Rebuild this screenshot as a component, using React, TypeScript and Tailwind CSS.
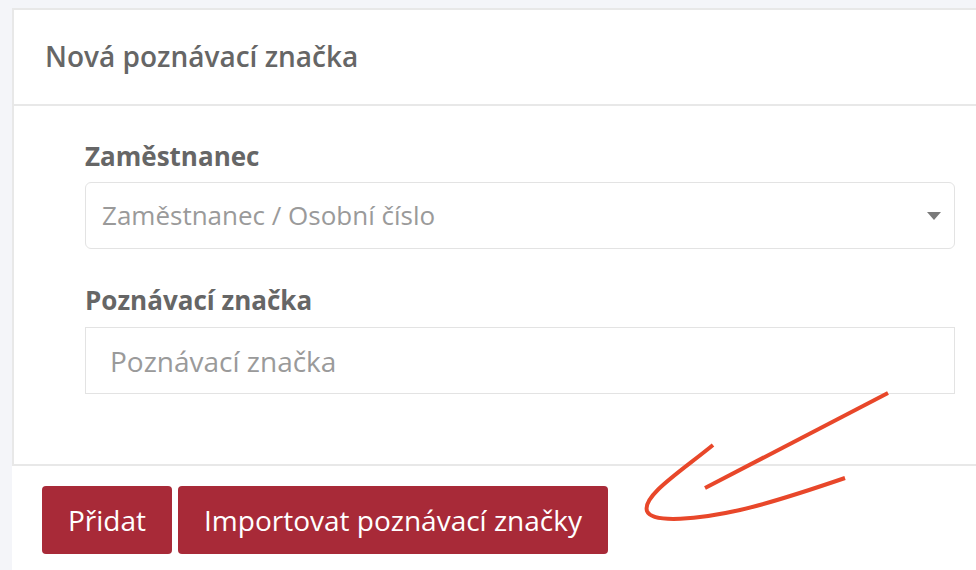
import React from "react";

export default function App() {
  return (
    <div
      className="relative w-[976px] h-[570px] overflow-hidden bg-[#f4f5f9] pt-2 pl-3"
      style={{ fontFamily: '"Open Sans", "Noto Sans", sans-serif' }}
    >
      <div className="w-[1040px] h-full bg-white">
        <div className="border-l-2 border-t-2 border-b-2 border-[#e8e8e8]">
          {/* header */}
          <div className="h-[96px] flex items-center pl-[31px] pb-[2px] border-b-2 border-[#e8e8e8]">
            <h2 className="text-[28px] font-semibold text-[#666666]">Nová poznávací značka</h2>
          </div>

          {/* body */}
          <div className="h-[358px] pl-[71px] pt-[32px]">
            <div className="w-[870px]">
              <label className="block text-[26px] leading-[36px] font-bold text-[#666666] mb-[8px]">
                Zaměstnanec
              </label>
              <div className="h-[67px] rounded-md border border-[#e3e3e3] flex items-center justify-between pl-4 pr-[13px]">
                <span className="text-[26px] text-[#9a9a9a]">Zaměstnanec / Osobní číslo</span>
                <svg width="14" height="8" viewBox="0 0 14 8">
                  <path d="M0 0 L14 0 L7 8 Z" fill="#7a7a7a" />
                </svg>
              </div>

              <label className="block text-[26px] leading-[36px] font-bold text-[#666666] mt-[33px] mb-[9px]">
                Poznávací značka
              </label>
              <input
                className="w-full h-[67px] border border-[#e3e3e3] pl-6 text-[28px] outline-none placeholder:text-[#9a9a9a]"
                placeholder="Poznávací značka"
              />
            </div>
          </div>
        </div>

        {/* footer */}
        <div className="pl-[30px] pt-[20px] flex gap-[6px]">
          <button className="h-[68px] px-[26px] rounded bg-[#a82a38] text-white text-[28px]">Přidat</button>
          <button className="h-[68px] px-[26px] rounded bg-[#a82a38] text-white text-[28px]">
            Importovat poznávací značky
          </button>
        </div>
      </div>

      {/* hand-drawn annotation arrow */}
      <svg className="absolute left-0 top-0 pointer-events-none" width="976" height="570">
        <g fill="none" stroke="#e8472a" strokeWidth="4" strokeLinecap="butt">
          <path d="M888 393 L705 488" />
          <path d="M713 445 C 680 472, 642 496, 647 511 C 652 524, 700 519, 740 510 C 775 502, 810 490, 845 478" />
        </g>
      </svg>
    </div>
  );
}
